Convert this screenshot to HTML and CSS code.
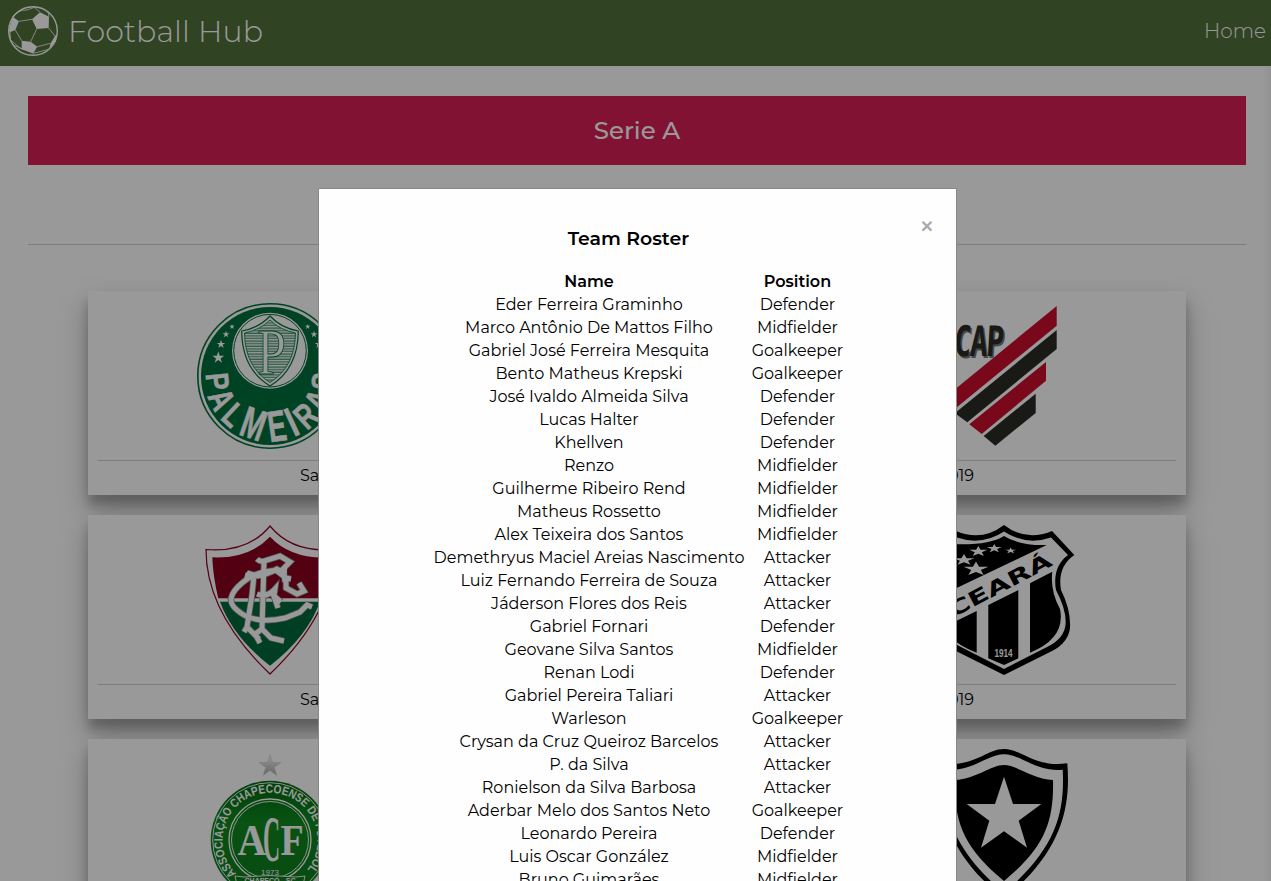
FILE: index.html
```html
<!DOCTYPE html>
<html lang="en">
<head>
<meta charset="utf-8">
<title>Football Hub</title>
<link rel="stylesheet" href="styles.css">
</head>
<body>
<header class="navbar">
  <svg class="ball" viewBox="0 0 50 50"><circle cx="25" cy="25" r="24.3" fill="none" stroke="#fff" stroke-width="1.4"/><path fill="#fff" d="M24 13.3 32 6.3 41 10.7 40.7 22 28.7 23ZM4.700 10.700 11 15.300 7.300 24 2 26.300.8 24ZM13.700 34.700 22.700 35.700 29.300 40.700 25.300 47.300 13.700 43.300ZM47 30 49.300 28 47.500 36 41 43.300 42.700 37.300Z"/><path fill="none" stroke="#fff" stroke-width=".8" d="M11 15.300 24 13.300M7.300 24 13.700 34.700M28.700 23 22.700 35.700M40.700 22 47 30M29.300 40.700 42.700 37.300M32 6.300 26 1M41 10.700 40 5.500M4.700 10.700Q9 4 19 4L26 1.500M2 26 2.500 34 13.700 43.300M5 39 25.300 47.300 41 43.300"/></svg>
  <span class="brand">Football Hub</span>
  <a class="home">Home</a>
</header>
<main class="page">
  <h1 class="league">Serie A</h1>
  <hr class="rule">
  <section class="matches">
    <article class="match">
      <div class="teams">
        <svg class="crest" viewBox="0 0 150 150">
          <defs><path id="star" d="M0-10 2.35-3.1 9.5-3.1 3.7 1.2 5.9 8.1 0 3.9-5.9 8.1-3.7 1.2-9.5-3.1-2.35-3.1Z"/>
          <pattern id="lines" width="4" height="2.6" patternUnits="userSpaceOnUse"><path d="M0 1H4" stroke="#006e3c" stroke-width=".9"/></pattern></defs>
          <circle cx="75" cy="75" r="72.2" fill="#fff" stroke="#00703c" stroke-width="1.6"/><circle cx="75" cy="75" r="69" fill="#00703c"/>
          <circle cx="75" cy="49.7" r="38" fill="#fff"/><circle cx="75" cy="49.7" r="36.3" fill="none" stroke="#00703c"/>
          <path d="M75 15Q64 27 46.7 30 47 68 75 85 103 68 103.3 30 86 27 75 15Z" fill="#fff" stroke="#00703c" stroke-width="1.2"/>
          <path d="M75 19Q65 29 49.5 32 50 66 75 81.500 100 66 100.500 32 85 29 75 19Z" fill="url(#lines)" stroke="#00703c" stroke-width=".8"/>
          <text class="palm-p" transform="translate(76.500 72.500) scale(.78 1)">P</text>
          <g class="palm"><text transform="rotate(84 75 75) translate(75 139) scale(.74 .92)">P</text><text transform="rotate(64 75 75) translate(75 140.500) scale(.74 .98)">A</text><text transform="rotate(43 75 75) translate(75 140.500) scale(.74 1)">L</text><text transform="rotate(19 75 75) translate(75 140.500) scale(.8 1.250)">M</text><text transform="rotate(-8 75 75) translate(75 140.500) scale(.78 1.250)">E</text><text transform="rotate(-25 75 75) translate(75 140.500) scale(.85 1.200)">I</text><text transform="rotate(-42 75 75) translate(75 140.500) scale(.74 1)">R</text><text transform="rotate(-63 75 75) translate(75 140.500) scale(.74 .98)">A</text><text transform="rotate(-84 75 75) translate(75 139.500) scale(.74 .92)">S</text></g>
          <g fill="#fff"><use href="#star" transform="translate(23.300 56.700) scale(.62)"/><use href="#star" transform="translate(26 43.300) scale(.45)"/><use href="#star" transform="translate(31 33.300) scale(.36)"/><use href="#star" transform="translate(37 25.700) scale(.28)"/><use href="#star" transform="translate(112.700 25.700) scale(.28)"/><use href="#star" transform="translate(119 33.300) scale(.36)"/><use href="#star" transform="translate(124 43.300) scale(.45)"/></g>
        </svg>
        <svg class="crest" viewBox="0 0 150 150">
          <path fill="#ca0f2c" d="M128.700 5V24.700L20 113.500V94ZM118 61V79.700L53.700 133 41.300 123.300Z"/>
          <path fill="#2b2a26" d="M128.700 29V48L39.300 121.300 28 113V111.300ZM107.700 92.700V112L67.300 144.700 55.700 135Z"/>
          <g class="cap"><text fill="#777" transform="translate(26.500 57) scale(.7 1) skewX(-5)">CAP</text><text fill="#2b2a26" transform="translate(25 55) scale(.7 1) skewX(-5)">CAP</text></g>
        </svg>
      </div>
      <div class="date"><span>Sat</span><span>2019</span></div>
    </article>
    <article class="match">
      <div class="teams">
        <svg class="crest" viewBox="0 0 150 150">
          <path d="M75 1Q53 28 11 24.500 11 88 75 149 139 88 139 24.500 97 28 75 1Z" fill="#fff" stroke="#8f0025" stroke-width="1.200"/>
          <path d="M75 11.700Q54 34 17.300 32.300 18 52 23.300 73.300H126.700Q132 52 132.700 32.300 96 34 75 11.700Z" fill="#8a0020"/>
          <path d="M25 76.700H125Q112 112 75 140.700 38 112 25 76.700Z" fill="#006a3c"/>
          <g fill="none" stroke="#7a8a80" stroke-width="6.600"><path id="mono" d="M62 34Q66 38 72 35L85 31 95 37 86 46M69 37 68 70 67 104 76 113 89 116M67 104 60 109 65 118M52 48 59 50 57 70 52 102 49 107M52 102 64 114M50 50Q64 54 82 44L89 48 90 57M82 46 91 53 96 54M91 53 91 63 102 69 109 66 104 58M92 46Q64 43 47 58 28 74 42 85 58 100 90 93L105 87 112 80 117 82M62 69Q72 73 80 64L79 71 86 77M77 66 83 83"/></g>
          <use href="#mono" fill="none" stroke="#fff" stroke-width="5"/>
        </svg>
        <svg class="crest" viewBox="0 0 150 150">
          <path d="M76 0Q98 17 124 6L146.300 30Q129 42 133 65 143 85 142 103 140 118 124 126L76 150 28 126Q12 118 10 103 9 85 19 65 23 42 6 30L28 6Q54 17 76 0Z"/>
          <path fill="#fff" d="M76 6.500Q98 21 123 12.500L140 30Q124 42 128 65 139 86 137.500 100 136 113 121 121L76 144 31 121Q16 113 14.500 100 13 86 24 65 28 42 12 30L29 12.500Q54 21 76 6.500Z"/>
          <path d="M76 11Q92 21 118.700 20L16 69Q28 42 22 19 60 21 76 11ZM60.300 80 90.300 65V133.300L76 140 60.300 133.300ZM102 58.300 124.300 46.700Q122 66 132 84 138 113 102 127.700ZM48.700 86V127.700Q31 121 20 110V100Z"/>
          <text class="ceara" transform="translate(24.500 93) rotate(-27.700)" textLength="114" lengthAdjust="spacingAndGlyphs">CEARÁ</text>
          <text class="year" x="66.500" y="132" textLength="18" lengthAdjust="spacingAndGlyphs">1914</text>
          <g fill="#fff"><use href="#star" transform="translate(48 44) scale(1.300 .75)"/><use href="#star" transform="translate(36 35) scale(1.100 .6)"/><use href="#star" transform="translate(50.300 26.500) scale(.95 .55)"/><use href="#star" transform="translate(66.300 23.500) scale(.77 .45)"/><use href="#star" transform="translate(82.700 25.700) scale(.57 .32)"/></g>
        </svg>
      </div>
      <div class="date"><span>Sat</span><span>2019</span></div>
    </article>
    <article class="match">
      <div class="teams">
        <svg class="crest" viewBox="0 0 150 150">
          <defs><linearGradient id="silver" x2="0" y2="1"><stop stop-color="#fff"/><stop offset="1" stop-color="#aaa"/></linearGradient><linearGradient id="grass" x2="0" y2="1"><stop stop-color="#006a10"/><stop offset=".35" stop-color="#0f8a20"/><stop offset="1" stop-color="#0d7a1c"/></linearGradient><path id="ring" d="M41.300 124.700A47.500 47.500 0 1 1 108.700 124.700"/></defs>
          <use href="#star" transform="translate(75 17) scale(1.150)" fill="url(#silver)" stroke="#ccc" stroke-width=".5"/>
          <circle cx="75" cy="91" r="59.300" fill="url(#grass)"/><g fill="none" stroke="#fff"><circle cx="75" cy="91" r="57.300" stroke-width=".9"/><circle cx="75" cy="91" r="41" stroke-width="1.300"/><circle cx="75" cy="91" r="38.500" stroke-width=".9"/></g>
          <text class="assoc"><textPath href="#ring" textLength="218" lengthAdjust="spacingAndGlyphs">ASSOCIAÇÃO CHAPECOENSE DE FUTEBOL</textPath></text>
          <g class="acf"><text transform="translate(57 106) scale(1.050 1.150)">A</text><text transform="translate(97 106) scale(1 1.150)">F</text><text transform="translate(76.500 112) scale(.62 1.750)">C</text></g>
          <text class="founded" x="75" y="125.500">1973</text>
          <path d="M42 136 40 127 49 128Q75 125 101 128L110 127 108 136Z" fill="#0d7a1c" stroke="#fff" stroke-width=".9"/><text class="city" x="75" y="134">CHAPECÓ - SC</text>
        </svg>
        <svg class="crest" viewBox="0 0 150 150">
          <path d="M76 0C94 0 106 19 139.300 14.300 143 60 133 103 76 150 19 103 9 60 12.700 14.300 46 19 58 0 76 0Z"/>
          <path fill="#fff" d="M76 5.300C92 5 108 23 134.700 20.700 137 66 127 100 76 144 25 100 15 66 17.300 20.700 44 23 60 5 76 5.300Z"/>
          <path d="M76 16C89 16 104 30 125 31 126 74 116 99 76 132 36 99 26 74 27 31 48 30 63 16 76 16Z"/>
          <path fill="#fff" d="M76 27.700 85 55H113.300L90.700 71.700 99 98.700 76 82.300 53 98.700 61.300 71.700 38.700 55H67Z"/>
        </svg>
      </div>
      <div class="date"><span>Sat</span><span>2019</span></div>
    </article>
  </section>
</main>
<div class="overlay">
  <div class="modal">
    <span class="close">×</span>
    <h2 class="title">Team Roster</h2>
    <table class="roster">
      <thead><tr><th>Name</th><th>Position</th></tr></thead>
      <tbody>
      <tr><td>Eder Ferreira Graminho</td><td>Defender</td></tr>
      <tr><td>Marco Antônio De Mattos Filho</td><td>Midfielder</td></tr>
      <tr><td>Gabriel José Ferreira Mesquita</td><td>Goalkeeper</td></tr>
      <tr><td>Bento Matheus Krepski</td><td>Goalkeeper</td></tr>
      <tr><td>José Ivaldo Almeida Silva</td><td>Defender</td></tr>
      <tr><td>Lucas Halter</td><td>Defender</td></tr>
      <tr><td>Khellven</td><td>Defender</td></tr>
      <tr><td>Renzo</td><td>Midfielder</td></tr>
      <tr><td>Guilherme Ribeiro Rend</td><td>Midfielder</td></tr>
      <tr><td>Matheus Rossetto</td><td>Midfielder</td></tr>
      <tr><td>Alex Teixeira dos Santos</td><td>Midfielder</td></tr>
      <tr><td>Demethryus Maciel Areias Nascimento</td><td>Attacker</td></tr>
      <tr><td>Luiz Fernando Ferreira de Souza</td><td>Attacker</td></tr>
      <tr><td>Jáderson Flores dos Reis</td><td>Attacker</td></tr>
      <tr><td>Gabriel Fornari</td><td>Defender</td></tr>
      <tr><td>Geovane Silva Santos</td><td>Midfielder</td></tr>
      <tr><td>Renan Lodi</td><td>Defender</td></tr>
      <tr><td>Gabriel Pereira Taliari</td><td>Attacker</td></tr>
      <tr><td>Warleson</td><td>Goalkeeper</td></tr>
      <tr><td>Crysan da Cruz Queiroz Barcelos</td><td>Attacker</td></tr>
      <tr><td>P. da Silva</td><td>Attacker</td></tr>
      <tr><td>Ronielson da Silva Barbosa</td><td>Attacker</td></tr>
      <tr><td>Aderbar Melo dos Santos Neto</td><td>Goalkeeper</td></tr>
      <tr><td>Leonardo Pereira</td><td>Defender</td></tr>
      <tr><td>Luis Oscar González</td><td>Midfielder</td></tr>
      <tr><td>Bruno Guimarães</td><td>Midfielder</td></tr>
      </tbody>
    </table>
  </div>
</div>
</body>
</html>
```
FILE: styles.css
```css
* { box-sizing: border-box; }
html, body { height: 881px; overflow: hidden; }
body { margin: 0; background: linear-gradient(to left, #f3f3f3, #fff 9px); color: #000; font: 16px/20px Montserrat, Inter, sans-serif; }
.navbar { display: flex; align-items: center; height: 66px; padding: 0 5px 4px 8px; background: #50703a; color: #fff; }
.ball { width: 50px; height: 50px; }
.brand { margin: 2px 0 0 10px; font-size: 30px; font-weight: 300; letter-spacing: .15px; }
.home { margin-left: auto; font-size: 20px; font-weight: 300; }
.page { width: 1218px; margin: 30px 0 0 28px; }
.league { margin: 0; height: 69px; line-height: 69px; text-align: center; background: #d91e58; color: #fff; font-size: 24.5px; font-weight: 500; }
.rule { margin: 79px 0 46px; border: 0; border-top: 1px solid #d0d0d0; }
.matches { display: grid; gap: 20px; margin: 0 60px; }
.match { height: 204px; padding: 10px; background: #fff; box-shadow: 0 14px 28px rgba(0,0,0,.25), 0 10px 10px rgba(0,0,0,.22); }
.teams { display: flex; justify-content: space-between; height: 159px; padding: 0 98px 0 97px; }
.crest { width: 150px; height: 150px; }
.date { display: flex; justify-content: space-between; padding: 5px 202px 0; border-top: 1px solid #d0d0d0; }
.overlay { position: fixed; inset: 0; overflow: hidden; padding-top: 188px; background: rgba(0,0,0,.4); }
.modal { width: 639px; height: 693px; overflow: hidden; margin-left: 318px; padding: 20px; border: 1px solid #888; border-bottom: 0; background: #fefefe; }
.close { float: right; width: 18px; padding-top: 7px; text-align: center; color: #aaa; font-size: 28px; font-weight: 500; }
.title { margin: 19px 0 20px; text-align: center; font-size: 18.9px; line-height: 22px; font-weight: 600; }
.roster { table-layout: fixed; width: 417px; margin-left: 93.5px; border-collapse: collapse; text-align: center; white-space: nowrap; }
.roster th, .roster td { height: 23px; padding: 0; line-height: 23px; }
.roster th:first-child { width: 313px; }
.roster th { font-weight: 600; }
.palm { font: bold 35px "Liberation Sans", sans-serif; fill: #fff; stroke: #fff; stroke-width: .5px; text-anchor: middle; }
.palm-p { font: 66px "Liberation Serif", serif; fill: #fff; stroke: #00703c; stroke-width: .9px; text-anchor: middle; }
.cap { font: bold 42px "DejaVu Sans Mono", monospace; letter-spacing: -2px; }
.ceara { font: bold 20px "DejaVu Sans", sans-serif; }
.year { font: bold 11px "Liberation Sans", sans-serif; fill: #fff; }
.assoc { font: bold 12px "Liberation Sans", sans-serif; fill: #fff; }
.acf { font: bold 38px "Liberation Serif", serif; fill: #fff; text-anchor: middle; }
.founded { font: 8px "Liberation Sans", sans-serif; fill: #fff; text-anchor: middle; }
.city { font: bold 7px "Liberation Sans", sans-serif; fill: #fff; text-anchor: middle; }
```
